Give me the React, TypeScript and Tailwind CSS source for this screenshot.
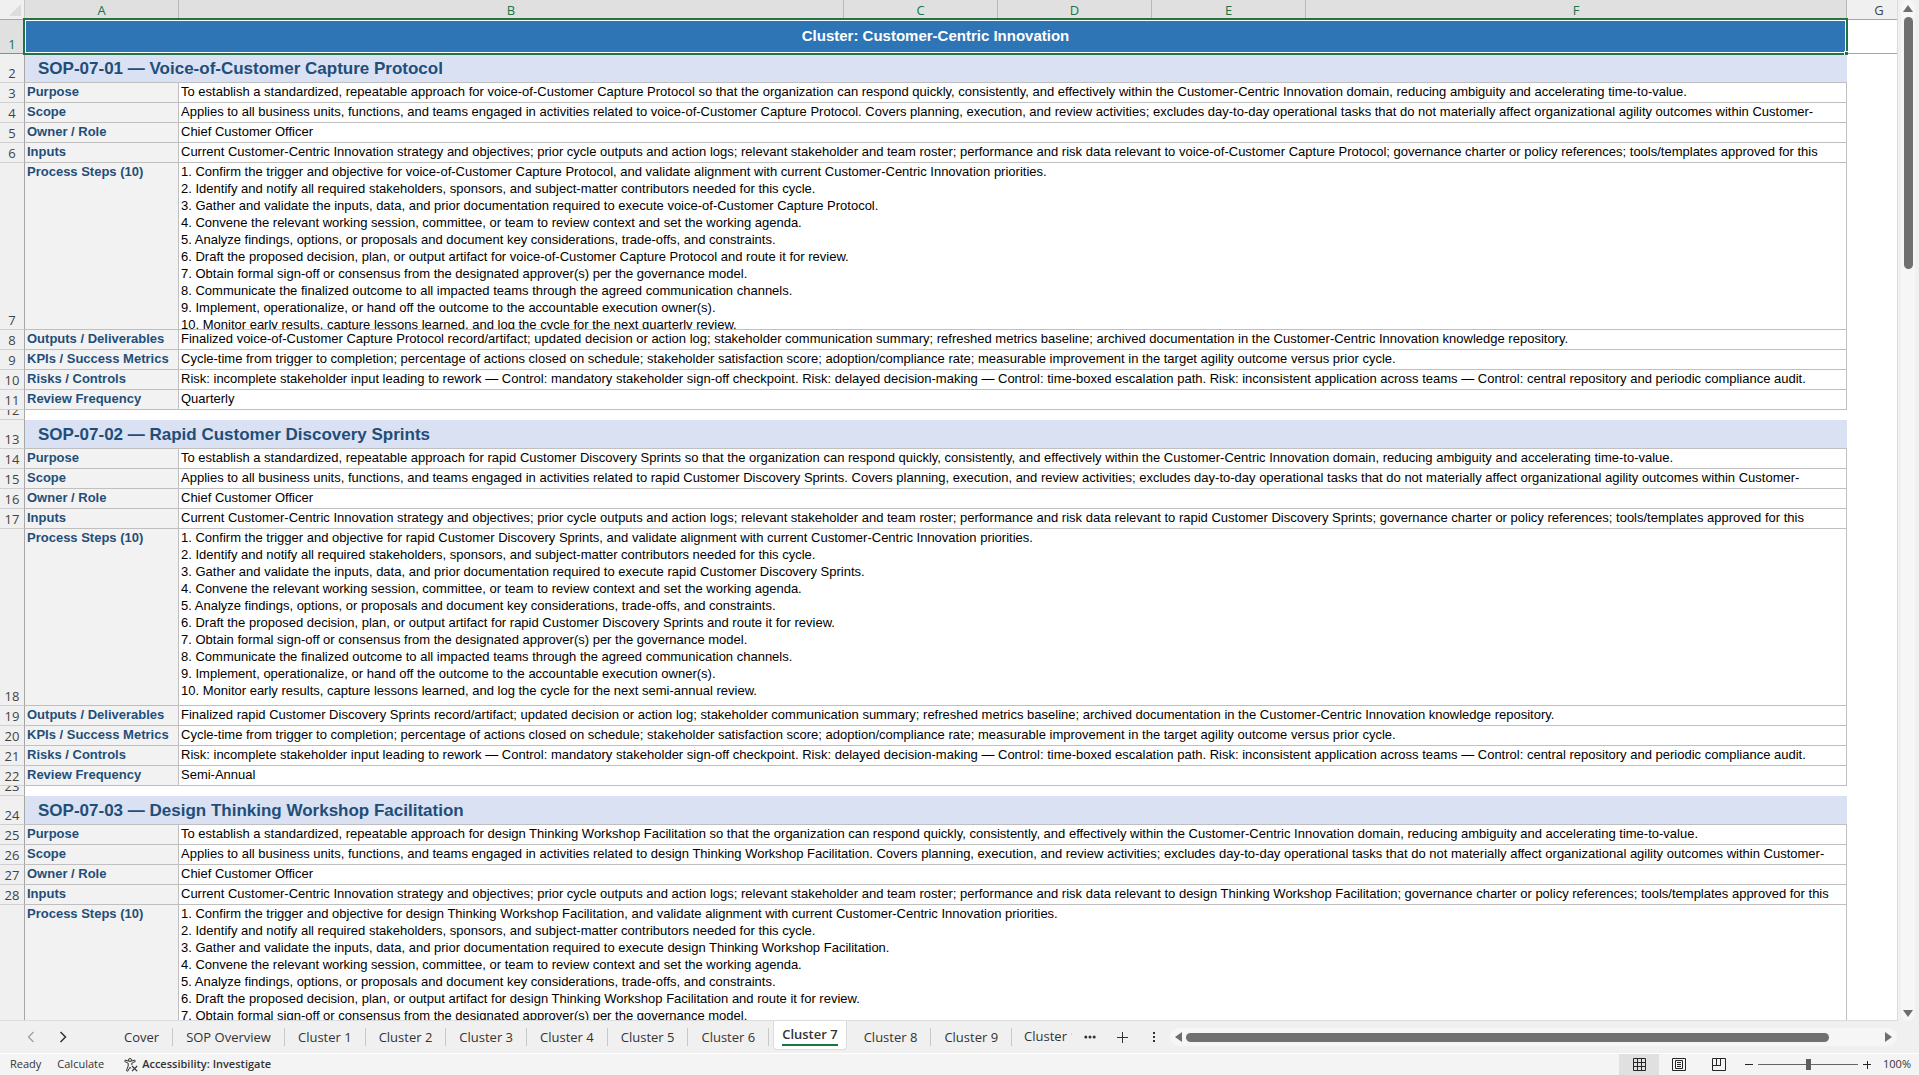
import type { ReactNode } from "react";

interface Sop {
  code: string;
  title: string;
  topic: string;
  review?: string;
  firstRow: number;
  stepsHeight: string;
}

const sops: Sop[] = [
  {
    code: "SOP-07-01",
    title: "Voice-of-Customer Capture Protocol",
    topic: "voice-of-Customer Capture Protocol",
    review: "Quarterly",
    firstRow: 2,
    stepsHeight: "h-[166px]",
  },
  {
    code: "SOP-07-02",
    title: "Rapid Customer Discovery Sprints",
    topic: "rapid Customer Discovery Sprints",
    review: "Semi-Annual",
    firstRow: 13,
    stepsHeight: "h-[176px]",
  },
  {
    code: "SOP-07-03",
    title: "Design Thinking Workshop Facilitation",
    topic: "design Thinking Workshop Facilitation",
    firstRow: 24,
    stepsHeight: "h-[176px]",
  },
];

const columns = ["A", "B", "C", "D", "E", "F"];

const tabs = [
  "Cover",
  "SOP Overview",
  "Cluster 1",
  "Cluster 2",
  "Cluster 3",
  "Cluster 4",
  "Cluster 5",
  "Cluster 6",
  "Cluster 7",
  "Cluster 8",
  "Cluster 9",
];

function getSteps(sop: Sop) {
  const steps = [
    `Confirm the trigger and objective for ${sop.topic}, and validate alignment with current Customer-Centric Innovation priorities.`,
    "Identify and notify all required stakeholders, sponsors, and subject-matter contributors needed for this cycle.",
    `Gather and validate the inputs, data, and prior documentation required to execute ${sop.topic}.`,
    "Convene the relevant working session, committee, or team to review context and set the working agenda.",
    "Analyze findings, options, or proposals and document key considerations, trade-offs, and constraints.",
    `Draft the proposed decision, plan, or output artifact for ${sop.topic} and route it for review.`,
    "Obtain formal sign-off or consensus from the designated approver(s) per the governance model.",
  ];
  if (!sop.review) return steps;
  return [
    ...steps,
    "Communicate the finalized outcome to all impacted teams through the agreed communication channels.",
    "Implement, operationalize, or hand off the outcome to the accountable execution owner(s).",
    `Monitor early results, capture lessons learned, and log the cycle for the next ${sop.review.toLowerCase()} review.`,
  ];
}

function RowNumber({ n, height = "h-[19px]" }: { n?: number; height?: string }) {
  return (
    <th
      scope="row"
      className="border-r border-b border-r-[#a6a6a6] border-b-[#d0d0d0] bg-[#f0f0f0] p-0 align-bottom font-['Open_Sans',sans-serif] text-[13px] font-normal text-[#444]"
    >
      <div className={`flex flex-col justify-end overflow-hidden ${height}`}>
        <span className="shrink-0 leading-[18px]">{n}</span>
      </div>
    </th>
  );
}

function Row({
  n,
  label,
  height = "h-[19px]",
  children,
}: {
  n?: number;
  label: string;
  height?: string;
  children: ReactNode;
}) {
  return (
    <tr>
      <RowNumber n={n} height={height} />
      <td className="border-r border-b border-[#bfbfbf] bg-[#f2f2f2] p-0 pl-0.5 align-top font-bold whitespace-nowrap text-[#1f4e79]">
        {label}
      </td>
      <td colSpan={5} className="border-r border-b border-[#bfbfbf] p-0 pl-0.5 align-top">
        <div className={`overflow-hidden whitespace-nowrap ${height}`}>{children}</div>
      </td>
      <td />
    </tr>
  );
}

function SopBlock({ sop }: { sop: Sop }) {
  const r = sop.firstRow;
  return (
    <>
      <tr>
        <RowNumber n={r} height="h-[28px]" />
        <td
          colSpan={6}
          className="border-b border-[#bfbfbf] bg-[#d9e1f2] p-0 pl-[13px] align-middle text-[17px] font-bold text-[#1f4e79]"
        >
          {sop.code} — {sop.title}
        </td>
        <td />
      </tr>
      <Row n={r + 1} label="Purpose">
        To establish a standardized, repeatable approach for {sop.topic} so that the organization can respond quickly,
        consistently, and effectively within the Customer-Centric Innovation domain, reducing ambiguity and accelerating
        time-to-value.
      </Row>
      <Row n={r + 2} label="Scope">
        Applies to all business units, functions, and teams engaged in activities related to {sop.topic}. Covers
        planning, execution, and review activities; excludes day-to-day operational tasks that do not materially affect
        organizational agility outcomes within Customer-
      </Row>
      <Row n={r + 3} label="Owner / Role">
        Chief Customer Officer
      </Row>
      <Row n={r + 4} label="Inputs">
        Current Customer-Centric Innovation strategy and objectives; prior cycle outputs and action logs; relevant
        stakeholder and team roster; performance and risk data relevant to {sop.topic}; governance charter or policy
        references; tools/templates approved for this
      </Row>
      <Row n={sop.review ? r + 5 : undefined} label="Process Steps (10)" height={sop.stepsHeight}>
        {getSteps(sop).map((step, i) => (
          <p key={i}>
            {i + 1}. {step}
          </p>
        ))}
      </Row>
      {sop.review && (
        <>
          <Row n={r + 6} label="Outputs / Deliverables">
            Finalized {sop.topic} record/artifact; updated decision or action log; stakeholder communication summary;
            refreshed metrics baseline; archived documentation in the Customer-Centric Innovation knowledge repository.
          </Row>
          <Row n={r + 7} label="KPIs / Success Metrics">
            Cycle-time from trigger to completion; percentage of actions closed on schedule; stakeholder satisfaction
            score; adoption/compliance rate; measurable improvement in the target agility outcome versus prior cycle.
          </Row>
          <Row n={r + 8} label="Risks / Controls">
            Risk: incomplete stakeholder input leading to rework — Control: mandatory stakeholder sign-off checkpoint.
            Risk: delayed decision-making — Control: time-boxed escalation path. Risk: inconsistent application across
            teams — Control: central repository and periodic compliance audit.
          </Row>
          <Row n={r + 9} label="Review Frequency">
            {sop.review}
          </Row>
          <tr>
            <RowNumber n={r + 10} height="h-[9px]" />
            <td colSpan={7} />
          </tr>
        </>
      )}
    </>
  );
}

function Sheet() {
  return (
    <table className="w-full table-fixed border-separate border-spacing-0 text-[13px] leading-[17px] text-black">
      <colgroup>
        <col className="w-[25px]" />
        <col className="w-[154px]" />
        <col className="w-[665px]" />
        <col className="w-[154px]" />
        <col className="w-[154px]" />
        <col className="w-[154px]" />
        <col className="w-[541px]" />
        <col className="w-16" />
      </colgroup>
      <thead>
        <tr className="font-['Open_Sans',sans-serif] text-[13px]">
          <td className="border-r border-b border-r-[#c6c6c6] border-b-[#a6a6a6] bg-[#f0f0f0] p-0">
            <svg className="ml-[9px] size-3" viewBox="0 0 12 12" aria-hidden="true">
              <path d="M12 0V12H0Z" fill="#dcdcdc" />
            </svg>
          </td>
          {columns.map((c) => (
            <th
              key={c}
              scope="col"
              className="h-5 border-r border-b border-r-[#b8b8b8] border-b-[#217346] bg-[#e0e0e0] p-0 leading-4 font-normal text-[#217346]"
            >
              {c}
            </th>
          ))}
          <th scope="col" className="border-b border-[#a6a6a6] bg-[#f0f0f0] p-0 leading-4 font-normal text-[#444]">
            G
          </th>
        </tr>
      </thead>
      <tbody>
        <tr>
          <th
            scope="row"
            className="border-r border-b border-r-[#217346] border-b-[#8c8c8c] bg-[#e0e0e0] p-0 align-bottom font-['Open_Sans',sans-serif] text-[13px] leading-[18px] font-normal text-[#217346]"
          >
            1
          </th>
          <td colSpan={6} className="relative h-[34px] border-b border-[#217346] bg-white p-0 py-px pr-0.5 pl-px">
            <div className="flex h-[31px] items-center justify-center bg-[#2e75b6] pb-0.5 text-[15px] font-bold text-white">
              Cluster: Customer-Centric Innovation
            </div>
            <span className="pointer-events-none absolute -top-0.5 -right-px -bottom-0.5 -left-0.5 border-2 border-[#217346]" />
            <span className="absolute -right-px -bottom-0.5 size-1 border-t border-l border-white bg-[#217346]" />
          </td>
          <td className="border-b border-[#a6a6a6]" />
        </tr>
        {sops.map((sop) => (
          <SopBlock key={sop.code} sop={sop} />
        ))}
      </tbody>
    </table>
  );
}

function TabBar() {
  return (
    <div className="flex h-8 shrink-0 items-center bg-[#f0f0f0] font-['Open_Sans',sans-serif] text-[13px] text-[#333]">
      <div className="flex w-[111px] shrink-0 items-center gap-5 pl-[25px]">
        <button type="button" aria-label="Previous sheets">
          <svg className="h-3 w-3" viewBox="0 0 12 12" fill="none" stroke="#a0a0a0" strokeWidth="1.3">
            <path d="M8.5 1L3.5 6L8.5 11" />
          </svg>
        </button>
        <button type="button" aria-label="Next sheets">
          <svg className="h-3 w-3" viewBox="0 0 12 12" fill="none" stroke="#333" strokeWidth="1.5">
            <path d="M3.5 1L8.5 6L3.5 11" />
          </svg>
        </button>
      </div>
      <nav className="flex h-full shrink-0 items-center">
        {tabs.map((tab) =>
          tab === "Cluster 7" ? (
            <button
              key={tab}
              type="button"
              className="mx-1 -mt-1 h-[29px] rounded-b border border-t-0 border-[#dcdcdc] bg-white px-2 font-semibold"
            >
              <span className="block border-b-2 border-[#107c41] leading-5">{tab}</span>
            </button>
          ) : (
            <button key={tab} type="button" className="h-[18px] border-r border-[#c8c8c8] px-[13px] leading-4">
              {tab}
            </button>
          )
        )}
        <button type="button" className="ml-3 w-12 overflow-hidden text-left whitespace-nowrap">
          Cluster 10
        </button>
      </nav>
      <div className="flex shrink-0 items-center pl-3">
        <button type="button" aria-label="More sheets">
          <svg className="h-3 w-3" viewBox="0 0 12 12" fill="#333">
            <circle cx="1.8" cy="6" r="1.5" />
            <circle cx="6" cy="6" r="1.5" />
            <circle cx="10.2" cy="6" r="1.5" />
          </svg>
        </button>
        <button type="button" aria-label="New sheet" className="ml-5">
          <svg className="h-3 w-3" viewBox="0 0 12 12" stroke="#333" strokeWidth="1">
            <path d="M6.5 1V12M1 6.5H12" />
          </svg>
        </button>
        <button type="button" aria-label="Resize tab bar" className="ml-5">
          <svg className="h-3 w-3" viewBox="0 0 12 12" fill="#333">
            <rect x="5" y="1" width="2" height="2" />
            <rect x="5" y="5" width="2" height="2" />
            <rect x="5" y="9" width="2" height="2" />
          </svg>
        </button>
      </div>
      <div className="mr-[22px] ml-2.5 flex h-[18px] flex-1 items-center rounded-full bg-[#f6f6f6] px-1">
        <svg className="h-2.5 w-2" viewBox="0 0 8 10" fill="#6e6e6e">
          <path d="M8 0V10L1 5Z" />
        </svg>
        <div className="ml-1 flex-1 pr-14">
          <div className="h-[9px] rounded-full bg-[#707070]" />
        </div>
        <svg className="h-2.5 w-2" viewBox="0 0 8 10" fill="#6e6e6e">
          <path d="M0 0V10L7 5Z" />
        </svg>
      </div>
    </div>
  );
}

function StatusBar() {
  return (
    <footer className="flex h-[22px] shrink-0 items-center border-t border-white bg-[#f4f4f4] font-['Open_Sans',sans-serif] text-[11px] text-[#333]">
      <span className="ml-2.5">Ready</span>
      <span className="ml-4">Calculate</span>
      <button type="button" className="ml-5 flex items-center gap-1 font-semibold">
        <svg className="size-3.5" viewBox="0 0 14 14" fill="none" stroke="#333" strokeWidth="1">
          <circle cx="6" cy="2" r="1.5" />
          <path d="M4.6 3.2L1.4 2L0.7 3.4L4.2 5.2V8L2.4 12.6L3.8 13.2L6 9.2L7 10.5" />
          <path d="M7.4 3.2L10.6 2L11.3 3.4L7.8 5.2V7" />
          <path d="M8 8L13.2 13.2M13.2 8L8 13.2" strokeWidth="1.2" />
        </svg>
        Accessibility: Investigate
      </button>
      <div className="ml-auto flex h-full items-center">
        <button type="button" aria-label="Normal view" className="flex h-full w-10 items-center justify-center bg-[#e0e0e0]">
          <svg className="size-[13px]" viewBox="0 0 13 13" fill="none" stroke="#262626">
            <path d="M0.5 0.5H12.5V12.5H0.5ZM4.5 0V13M8.5 0V13M0 4.5H13M0 8.5H13" />
          </svg>
        </button>
        <button type="button" aria-label="Page layout view" className="flex h-full w-10 items-center justify-center">
          <svg className="h-[13px] w-3.5" viewBox="0 0 14 13" fill="none" stroke="#262626">
            <path d="M0.5 0.5H13.5V12.5H0.5ZM3.5 2.5H10.5V10.5H3.5ZM5 4.5H9M5 6.5H9M5 8.5H9" />
          </svg>
        </button>
        <button type="button" aria-label="Page break preview" className="flex h-full w-10 items-center justify-center">
          <svg className="h-[13px] w-3.5" viewBox="0 0 14 13" fill="none" stroke="#262626">
            <path d="M0.5 0.5H13.5V12.5H0.5ZM4.5 0V7.5M8.5 0V8M0 7.5H9" />
          </svg>
        </button>
        <button type="button" aria-label="Zoom out" className="ml-1.5">
          <svg className="size-2" viewBox="0 0 8 8" stroke="#262626">
            <path d="M0 3.5H8" />
          </svg>
        </button>
        <input
          type="range"
          aria-label="Zoom"
          min={0}
          max={200}
          defaultValue={100}
          className="mx-[5px] h-3 w-[100px] appearance-none bg-[linear-gradient(#666,#666)] bg-[length:100%_1px] bg-center bg-no-repeat [&::-webkit-slider-thumb]:h-[11px] [&::-webkit-slider-thumb]:w-[5px] [&::-webkit-slider-thumb]:appearance-none [&::-webkit-slider-thumb]:bg-[#5f5f5f]"
        />
        <button type="button" aria-label="Zoom in">
          <svg className="size-2" viewBox="0 0 8 8" stroke="#262626">
            <path d="M0 3.5H8M4.5 0V8" />
          </svg>
        </button>
        <button type="button" className="mr-2 ml-3">
          100%
        </button>
      </div>
    </footer>
  );
}

export default function App() {
  return (
    <div className="flex h-screen flex-col overflow-hidden bg-[#f0f0f0] font-['Liberation_Sans',Arial,sans-serif]">
      <main className="flex min-h-0 flex-1">
        <div className="min-w-0 flex-1 overflow-hidden border-r border-b border-[#dcdcdc] bg-white">
          <Sheet />
        </div>
        <div className="mr-1 ml-[3px] flex w-3.5 flex-col items-center rounded-full bg-[#f6f6f6] pt-1 pb-[3px]">
          <svg className="h-2 w-2.5 shrink-0" viewBox="0 0 10 8" fill="#6e6e6e">
            <path d="M0 8H10L5 1Z" />
          </svg>
          <div className="mt-[5px] h-[252px] w-[9px] rounded-full bg-[#707070]" />
          <svg className="mt-auto h-2 w-2.5 shrink-0" viewBox="0 0 10 8" fill="#6e6e6e">
            <path d="M0 0H10L5 7Z" />
          </svg>
        </div>
      </main>
      <TabBar />
      <StatusBar />
    </div>
  );
}
